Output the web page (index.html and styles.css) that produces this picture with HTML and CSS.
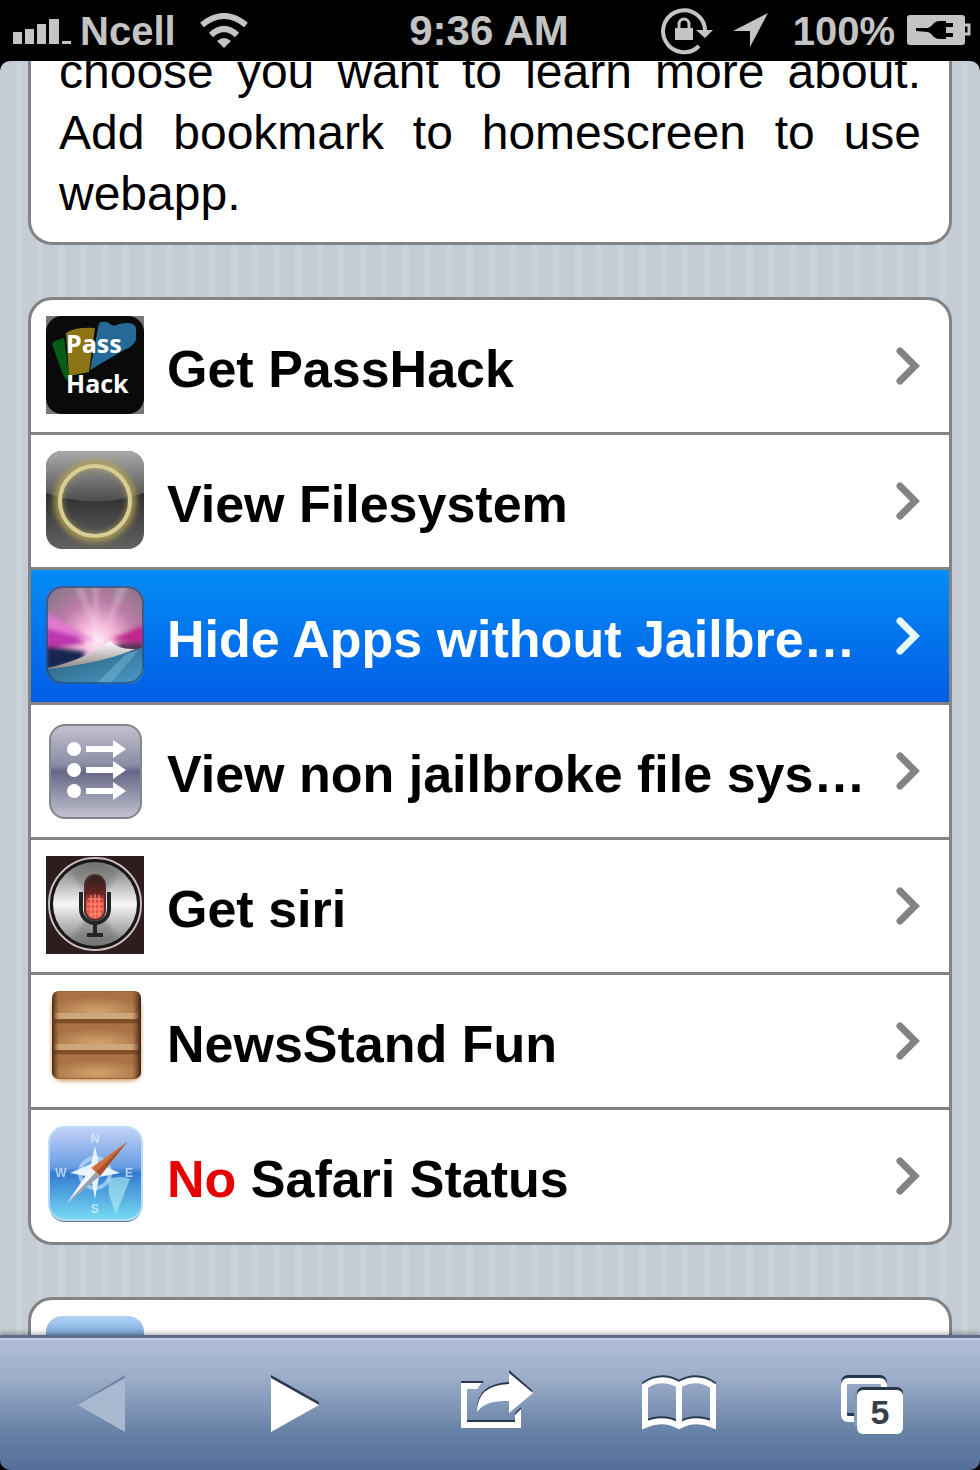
FILE: index.html
```
<!DOCTYPE html>
<html lang="en">
<head>
    <meta charset="utf-8">
    <meta name="viewport" content="width=device-width, initial-scale=1">
    <title>Webapp</title>
    <link rel="stylesheet" href="styles.css">
</head>
<body>
<header class="statusbar">
    <div class="status-left">
        <svg class="signal" width="60" height="26" viewBox="0 0 60 26" fill="#c4c4c4" aria-hidden="true">
            <path d="M1 14h9v12H1zM13 11h9v15h-9zM25 6h9v20h-9zM37 1h10v25H37zM50 23h9v3h-9z"/>
        </svg>
        <span class="carrier">Ncell</span>
        <svg class="wifi" width="48" height="36" viewBox="0 0 48 36" aria-hidden="true">
            <path d="M2 12Q24-6 46 12" fill="none" stroke="#c4c4c4" stroke-width="6"/>
            <path d="M11 22Q24 10 37 22" fill="none" stroke="#c4c4c4" stroke-width="6"/>
            <path d="M24 35l-7-7q7-6 14 0z" fill="#c4c4c4"/>
        </svg>
    </div>
    <div class="clock">9:36 AM</div>
    <div class="status-right">
        <svg width="53" height="48" viewBox="0 0 53 48" aria-hidden="true">
            <path d="M39 39A21 21 0 1 1 45 26" fill="none" stroke="#c4c4c4" stroke-width="4"/>
            <path d="M36 23h17l-8 8z" fill="#c4c4c4"/>
            <path d="M15 21h18v12H15z" fill="#c4c4c4"/>
            <path d="M19 22v-5a5 5 0 0 1 10 0v5" fill="none" stroke="#c4c4c4" stroke-width="3"/>
        </svg>
        <svg class="location" width="36" height="36" viewBox="0 0 36 36" aria-hidden="true">
            <path d="M35 0L17 34V18H0z" fill="#c4c4c4"/>
        </svg>
        <span class="percent">100%</span>
        <svg class="battery" width="65" height="32" viewBox="0 0 65 32" aria-hidden="true">
            <rect x="0" y="0" width="58" height="30" rx="3" fill="#c4c4c4"/>
            <path d="M58 10h4v9h-4" fill="none" stroke="#c4c4c4" stroke-width="3"/>
            <path d="M9 13h12q3-1 6-5 2-2 6-2h6v2h7v4h-7v6h7v4h-7v2h-6q-4 0-6-2-3-4-6-5L9 16z" fill="#000"/>
        </svg>
    </div>
</header>

<main class="page">
    <p class="card intro">choose you want to learn more about. Add bookmark to homescreen to use webapp.</p>

    <ul class="card menu">
        <li><a href="#passhack">
            <svg class="icon" width="98" height="98" viewBox="0 0 98 98" aria-hidden="true">
                <rect width="98" height="98" fill="#777"/>
                <rect width="98" height="98" rx="16" fill="#0a0a0a"/>
                <path d="M6 28q0-3 12-6l6 44q-5-2-8-10z" fill="#075c16"/>
                <path d="M20 17q8-6 29-5l-6 44-20 4z" fill="#8d7414"/>
                <path d="M53 7q7-3 11 1 4 3 9 0 15-3 17 4v12q-3 7-12 10L44 54z" fill="#256997"/>
                <g class="icon-title" fill="#fff">
                    <text x="20" y="37">Pass</text>
                    <text x="20" y="77">Hack</text>
                </g>
            </svg>
            <span class="label">Get PassHack</span>
            <svg class="chevron" width="28" height="40" viewBox="0 0 28 40" aria-hidden="true"><path d="M6 6l15 15L6 36"/></svg>
        </a></li>
        <li><a href="#filesystem">
            <svg class="icon" width="98" height="98" viewBox="0 0 98 98" aria-hidden="true">
                <defs>
                    <linearGradient id="gloss" x2="0" y2="1"><stop stop-color="#aaa"/><stop offset="1" stop-color="#4c4c4c"/></linearGradient>
                    <linearGradient id="dark" x2="0" y2="1"><stop offset=".45" stop-color="#303030"/><stop offset="1" stop-color="#626262"/></linearGradient>
                    <filter id="glow" x="-20%" y="-20%" width="140%" height="140%"><feGaussianBlur stdDeviation="3"/></filter>
                    <clipPath id="round"><rect width="98" height="98" rx="16"/></clipPath>
                </defs>
                <g clip-path="url(#round)">
                    <rect width="98" height="98" fill="url(#dark)"/>
                    <path d="M0 0h98v42q-49 17-98 0z" fill="url(#gloss)"/>
                    <circle cx="49" cy="50" r="37" fill="none" stroke="#b3a355" stroke-width="7" filter="url(#glow)"/>
                    <circle cx="49" cy="50" r="35" fill="none" stroke="#d8cd94" stroke-width="4"/>
                </g>
            </svg>
            <span class="label">View Filesystem</span>
            <svg class="chevron" width="28" height="40" viewBox="0 0 28 40" aria-hidden="true"><path d="M6 6l15 15L6 36"/></svg>
        </a></li>
        <li><a class="active" href="#hide-apps">
            <svg class="icon" width="98" height="98" viewBox="0 0 98 98" aria-hidden="true">
                <defs>
                    <radialGradient id="aurora" cx=".52" cy=".56" r=".62"><stop stop-color="#fff0f6"/><stop offset=".3" stop-color="#f5b4d9"/><stop offset=".65" stop-color="#bb7ba6"/><stop offset="1" stop-color="#93788c"/></radialGradient>
                    <linearGradient id="water" x2="1" y2="1"><stop stop-color="#285879"/><stop offset="1" stop-color="#4b9cc6"/></linearGradient>
                    <linearGradient id="curl" x2="0" y2="1"><stop stop-color="#fff"/><stop offset="1" stop-color="#8a847f"/></linearGradient>
                    <filter id="soft"><feGaussianBlur stdDeviation="2"/></filter>
                </defs>
                <g clip-path="url(#round)">
                    <rect width="98" height="98" fill="url(#aurora)"/>
                    <g filter="url(#soft)">
                        <path d="M0 30l40 27L0 62z" fill="#bc36ad"/>
                        <path d="M0 26l50 30L0 42z" fill="#e477cf"/>
                        <path d="M66 53l32-14v20z" fill="#c0278b"/>
                        <path d="M52 50L28 0h9zM58 50L72 0h10zM50 50L46 0h7z" fill="#fff" opacity=".25"/>
                        <path d="M0 60l20 3 20 3-5 9-35 10z" fill="#17254f"/>
                        <path d="M70 57l28 0v10H78z" fill="#55355c"/>
                    </g>
                    <path d="M0 83q50-6 98-22v37H0z" fill="url(#water)"/>
                    <path d="M80 68l12-3-28 33H50z" fill="#80c2dc" opacity=".4"/>
                    <path d="M2 82q36-8 62-27 8 9 25 8-32 14-87 20z" fill="url(#curl)"/>
                </g>
                <rect x="1" y="1" width="96" height="96" rx="16" fill="none" stroke="#174c8f" stroke-width="2" opacity=".7"/>
            </svg>
            <span class="label">Hide Apps without Jailbre…</span>
            <svg class="chevron" width="28" height="40" viewBox="0 0 28 40" aria-hidden="true"><path d="M6 6l15 15L6 36"/></svg>
        </a></li>
        <li><a href="#non-jailbroke">
            <svg class="icon" width="98" height="98" viewBox="0 0 98 98" aria-hidden="true">
                <defs>
                    <linearGradient id="slate" x2="0" y2="1"><stop stop-color="#c3c3cf"/><stop offset=".43" stop-color="#8b8ba4"/><stop offset=".5" stop-color="#666787"/><stop offset="1" stop-color="#c3c3d0"/></linearGradient>
                </defs>
                <rect x="4" y="4" width="91" height="93" rx="15" fill="url(#slate)" stroke="#85858d" stroke-width="2"/>
                <g fill="#fff">
                    <circle cx="28" cy="28" r="7"/><circle cx="28" cy="49" r="7"/><circle cx="28" cy="70" r="7"/>
                    <path id="arrow" d="M40 25h27v-6l13 9-13 9v-6H40z"/>
                    <use href="#arrow" y="21"/>
                    <use href="#arrow" y="42"/>
                </g>
            </svg>
            <span class="label">View non jailbroke file sys…</span>
            <svg class="chevron" width="28" height="40" viewBox="0 0 28 40" aria-hidden="true"><path d="M6 6l15 15L6 36"/></svg>
        </a></li>
        <li><a href="#siri">
            <svg class="icon" width="98" height="98" viewBox="0 0 98 98" aria-hidden="true">
                <defs>
                    <linearGradient id="steel" x2="0" y2="1"><stop stop-color="#727272"/><stop offset=".5" stop-color="#f7f7f7"/><stop offset="1" stop-color="#777"/></linearGradient>
                    <linearGradient id="mic" x2="0" y2="1"><stop stop-color="#2b2020"/><stop offset=".4" stop-color="#642421"/><stop offset=".6" stop-color="#e6493b"/><stop offset="1" stop-color="#f0604b"/></linearGradient>
                </defs>
                <rect width="98" height="98" fill="#2e1c1e"/>
                <circle cx="49" cy="48" r="46" fill="#161616" stroke="#c9bcbb" stroke-width="2"/>
                <circle cx="49" cy="48" r="42" fill="url(#steel)"/>
                <path d="M49 49L24 17q25-18 50 0zM49 49L26 82q23 13 46 0z" fill="#555" opacity=".3" filter="url(#soft)"/>
                <rect x="39" y="19" width="20" height="45" rx="10" fill="url(#mic)" stroke="#4c3030" stroke-width="2"/>
                <path d="M42 43h14M41 48h16M41 53h16M43 58h12M45 39v22M49 38v24M53 39v22" stroke="#ff9b87" stroke-width="1"/>
                <path d="M35 36v17a14 14 0 0 0 28 0V36M49 67v12M41 79h16" fill="none" stroke="#252323" stroke-width="4"/>
            </svg>
            <span class="label">Get siri</span>
            <svg class="chevron" width="28" height="40" viewBox="0 0 28 40" aria-hidden="true"><path d="M6 6l15 15L6 36"/></svg>
        </a></li>
        <li><a href="#newsstand">
            <svg class="icon" width="98" height="98" viewBox="0 0 98 98" aria-hidden="true">
                <defs>
                    <radialGradient id="wood" cx=".5" cy=".8" r=".6"><stop stop-color="#d2a46d"/><stop offset="1" stop-color="#a97145"/></radialGradient>
                    <linearGradient id="sides"><stop stop-color="#4a2c18"/><stop offset=".08" stop-color="#704526" stop-opacity="0"/><stop offset=".9" stop-color="#704526" stop-opacity="0"/><stop offset="1" stop-color="#39241b"/></linearGradient>
                </defs>
                <rect x="6" y="5" width="89" height="85" rx="10" fill="#d09a60" filter="url(#soft)"/>
                <rect x="6" y="0" width="89" height="88" rx="7" fill="#996538"/>
                <path d="M8 1h85v24H8z" fill="url(#wood)"/>
                <path d="M8 33h85v23H8z" fill="url(#wood)"/>
                <path d="M8 64h85v19q-3 4-7 4H14q-5 0-6-5z" fill="url(#wood)"/>
                <path d="M8 22h85v6H8zM8 53h85v6H8z" fill="#cda67a"/>
                <path d="M8 28h85v4H8zM8 59h85v4H8z" fill="#73451f" opacity=".7"/>
                <rect x="6" y="0" width="89" height="88" rx="7" fill="url(#sides)"/>
            </svg>
            <span class="label">NewsStand Fun</span>
            <svg class="chevron" width="28" height="40" viewBox="0 0 28 40" aria-hidden="true"><path d="M6 6l15 15L6 36"/></svg>
        </a></li>
        <li><a href="#safari">
            <svg class="icon" width="98" height="98" viewBox="0 0 98 98" aria-hidden="true">
                <defs>
                    <linearGradient id="sky" x2="0" y2="1"><stop stop-color="#c5d3f5"/><stop offset=".43" stop-color="#689de4"/><stop offset=".5" stop-color="#347bd0"/><stop offset="1" stop-color="#77dcf5"/></linearGradient>
                </defs>
                <rect x="3" y="4" width="93" height="92" rx="16" fill="#517d9b"/>
                <rect x="3" y="1" width="93" height="93" rx="16" fill="url(#sky)" stroke="#b8dcf5" stroke-width="2"/>
                <path d="M62 53q14-4 22 0l-6 15-8 20-7-19z" fill="#b4f0ef" opacity=".6"/>
                <circle cx="49" cy="47" r="15" fill="none" stroke="#bcddf5" stroke-width="4" opacity=".7"/>
                <path d="M49 20l4 18 21 9-21 4-4 22-4-22-21-4 21-9z" fill="#e7f4ff"/>
                <g class="compass" fill="#e7f4ff" opacity=".7">
                    <text x="49" y="17">N</text>
                    <text x="83" y="51">E</text>
                    <text x="49" y="87">S</text>
                    <text x="15" y="51">W</text>
                </g>
                <path d="M81 16L54 50l-9-8z" fill="#d4703f"/>
                <path d="M81 16L54 50l-4-4z" fill="#a54f2f"/>
                <path d="M45 42l9 8-33 27z" fill="#f4f4f4"/>
                <path d="M50 46l4 4-33 27z" fill="#9aa1ad"/>
            </svg>
            <span class="label"><span class="no">No</span> Safari Status</span>
            <svg class="chevron" width="28" height="40" viewBox="0 0 28 40" aria-hidden="true"><path d="M6 6l15 15L6 36"/></svg>
        </a></li>
    </ul>

    <ul class="card menu">
        <li><a href="#more" aria-label="More">
            <svg class="icon" width="98" height="98" viewBox="0 0 98 98" aria-hidden="true">
                <defs>
                    <linearGradient id="blue" x2="0" y2="1"><stop stop-color="#b2d2f5"/><stop offset=".25" stop-color="#6c9fd5"/><stop offset="1" stop-color="#3978c0"/></linearGradient>
                </defs>
                <rect width="98" height="98" rx="16" fill="url(#blue)"/>
                <path d="M50 21l10-2v4z" fill="#a8cdef"/>
            </svg>
        </a></li>
    </ul>
</main>

<nav class="toolbar">
    <button type="button" aria-label="Back" disabled>
        <svg width="48" height="66" viewBox="0 0 48 66">
            <path d="M0 33L47 5v4z" fill="#7487a8"/>
            <path d="M0 35L47 8v54z" fill="#a9b9d0"/>
        </svg>
    </button>
    <button type="button" aria-label="Forward">
        <svg width="48" height="66" viewBox="0 0 48 66">
            <path d="M0 5l48 27v3L0 9z" fill="#293b52"/>
            <path d="M0 8l48 27L0 62z" fill="#fff"/>
        </svg>
    </button>
    <button type="button" aria-label="Share">
        <svg width="92" height="66" viewBox="0 0 92 66">
            <path d="M43 11H20v45h60V37l-6 6v7H26V17h12z" fill="#28384c"/>
            <path d="M68 0l24 21-24 20V29q-24-1-32 10 0-25 32-27z" fill="#28384c"/>
            <path d="M41 13H20v45h60V39l-6 6v7H26V19h10z" fill="#fff"/>
            <path d="M68 3l24 20-24 20V31q-24-1-32 11 0-27 32-28z" fill="#fff"/>
        </svg>
    </button>
    <button type="button" aria-label="Bookmarks">
        <svg width="76" height="66" viewBox="0 0 76 66">
            <path d="M4 53V14Q20 3 38 13Q56 3 72 14V53Q54 45 38 54Q22 45 4 53ZM38 13V52" fill="none" stroke="#28384c" stroke-width="6"/>
            <path d="M4 55V16Q20 5 38 15Q56 5 72 16V55Q54 47 38 56Q22 47 4 55ZM38 15V54" fill="none" stroke="#fff" stroke-width="6"/>
        </svg>
    </button>
    <button type="button" aria-label="Tabs, 5 open">
        <svg width="62" height="66" viewBox="0 0 62 66">
            <rect x="3" y="8" width="40" height="38" rx="4" fill="none" stroke="#28384c" stroke-width="6"/>
            <rect x="3" y="11" width="40" height="38" rx="4" fill="none" stroke="#fff" stroke-width="6"/>
            <rect x="13" y="20" width="34" height="36" fill="#8599b8"/>
            <rect x="16" y="17" width="46" height="44" rx="6" fill="#28384c"/>
            <rect x="16" y="20" width="46" height="44" rx="6" fill="#fff"/>
            <text class="tab-count" x="39" y="54" fill="#374048">5</text>
        </svg>
    </button>
</nav>
</body>
</html>
```
FILE: styles.css
```
* {
    box-sizing: border-box;
}

body {
    margin: 0;
    height: 100vh;
    display: flex;
    flex-direction: column;
    overflow: hidden;
    background: #000;
    font-family: "Liberation Sans", Arial, Helvetica, sans-serif;
}

svg {
    display: block;
    flex-shrink: 0;
}

/* status bar */
.statusbar {
    display: grid;
    grid-template-columns: 1fr auto 1fr;
    align-items: center;
    flex-shrink: 0;
    height: 61px;
    padding: 0 8px 0 12px;
    color: #c4c4c4;
    font-size: 40px;
    line-height: 48px;
    font-weight: bold;
}

.status-left, .status-right {
    display: flex;
    align-items: center;
}

.status-right {
    justify-content: flex-end;
}

.carrier {
    margin: 0 24px 0 8px;
}

.clock {
    padding-right: 6px;
    font-size: 42px;
}

.location {
    margin: 0 24px 0 20px;
}

.battery {
    margin-left: 12px;
}

/* scrolled page */
.page {
    flex: 1;
    min-height: 0;
    overflow: hidden;
    padding: 0 28px;
    border-radius: 10px 10px 0 0;
    background: repeating-linear-gradient(90deg, #c5ccd4 0, #c5ccd4 16px, #cbd3da 16px, #cbd3da 22px, #c5ccd4 22px, #c5ccd4 37px, #cbd3da 37px, #cbd3da 43px);
}

.card {
    margin: 0 0 52px;
    border: 3px solid #838383;
    border-radius: 24px;
    background: #fff;
    overflow: hidden;
}

.intro {
    margin-top: -38px;
    padding: 15px 28px 18px;
    font-size: 48px;
    line-height: 61px;
    text-align: justify;
}

.menu {
    padding: 0;
    list-style: none;
}

.menu li + li {
    border-top: 3px solid #838383;
}

.menu a {
    display: flex;
    align-items: center;
    height: 132px;
    padding: 0 27px 2px 15px;
    color: #000;
    text-decoration: none;
}

.menu a.active {
    color: #fff;
    background: linear-gradient(#058cf5, #015de6);
}

.label {
    flex: 1;
    min-width: 0;
    padding: 7px 0 0 23px;
    font-size: 52px;
    font-weight: bold;
    white-space: nowrap;
}

.no {
    color: #e60000;
}

.chevron {
    fill: none;
    stroke: #838383;
    stroke-width: 7;
    stroke-linecap: round;
}

.active .chevron {
    stroke: #e5fbff;
}

.icon-title {
    font: bold 25px "Open Sans", sans-serif;
}

.compass {
    font-size: 12px;
    font-weight: bold;
    text-anchor: middle;
}

/* bottom toolbar */
.toolbar {
    display: grid;
    grid-template-columns: repeat(5, 1fr);
    flex-shrink: 0;
    height: 135px;
    padding: 0 12px 2px 6px;
    border-top: 3px solid #5b6d8a;
    border-radius: 0 0 10px 10px;
    background: linear-gradient(#b0bfd5, #9dadca 30%, #6581a5 72%, #566f9a);
    box-shadow: inset 0 2px #becbe0, 0 -2px 5px rgba(0, 0, 0, .3);
}

.toolbar button {
    display: flex;
    align-items: center;
    justify-content: center;
    padding: 0;
    border: 0;
    background: none;
}

.tab-count {
    font-size: 34px;
    font-weight: bold;
    text-anchor: middle;
}
```
